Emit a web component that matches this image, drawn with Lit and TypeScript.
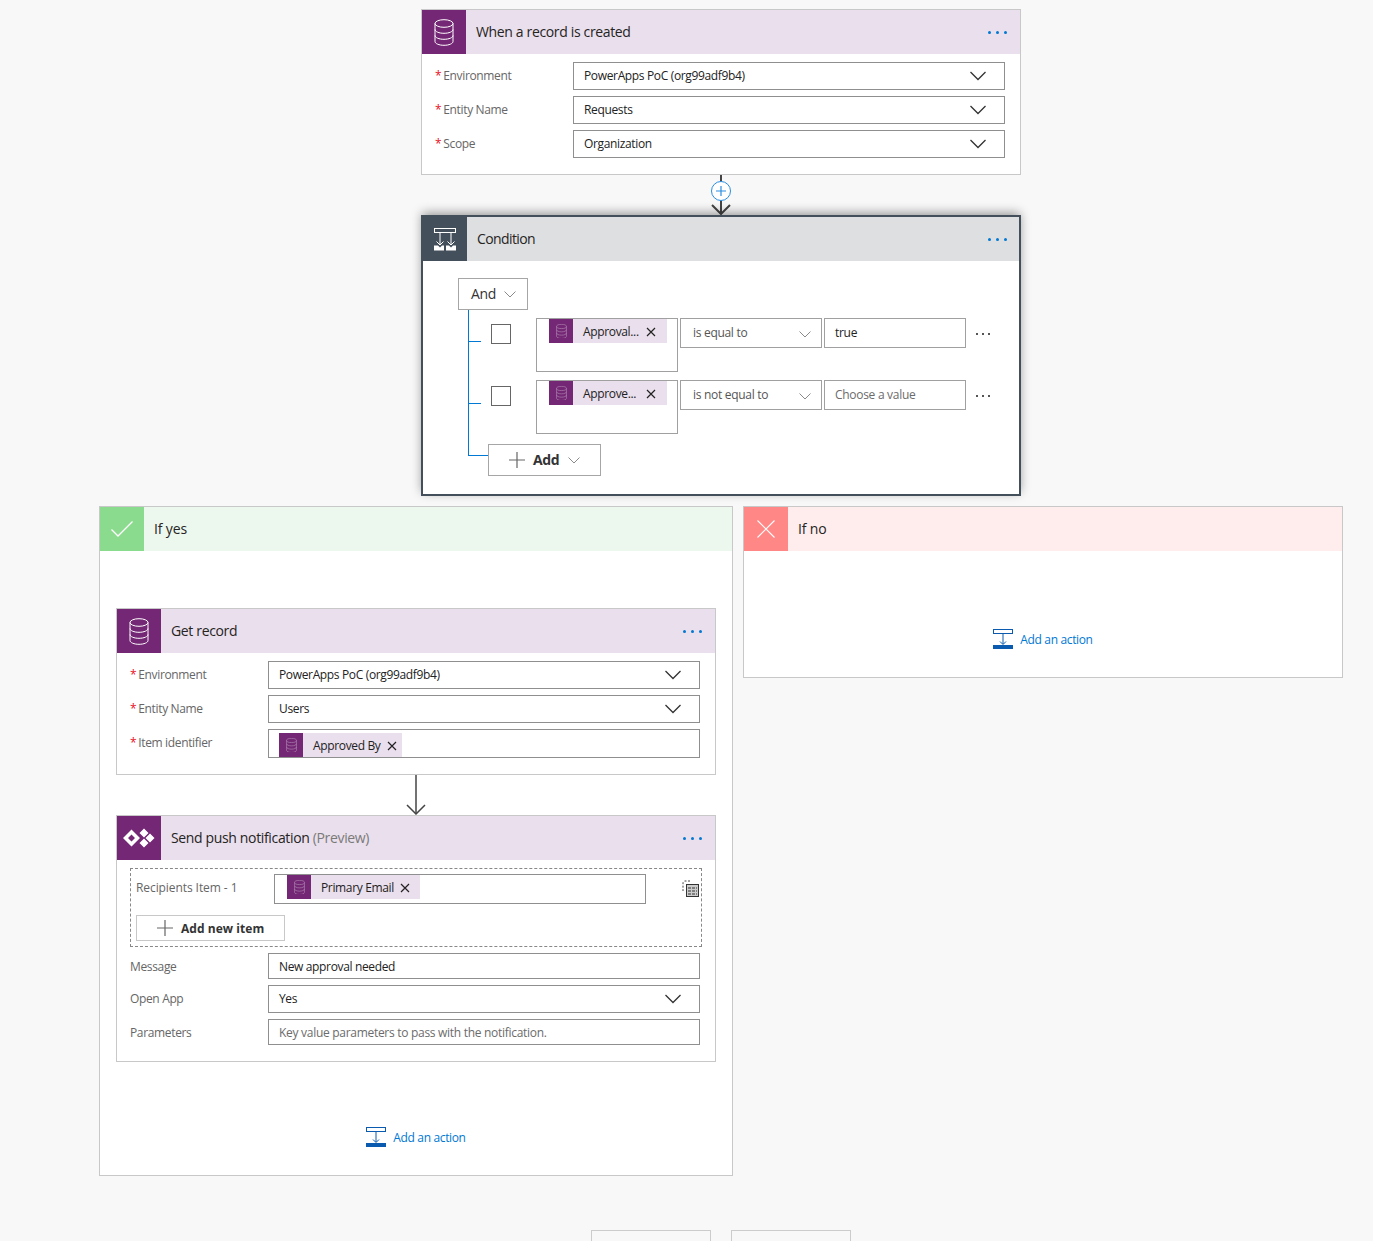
import { LitElement, html, css } from "lit";
import { customElement } from "lit/decorators.js";

const db = (c: string, w = 20, sw = 1) => html`<svg width=${w} height=${w * 1.35} viewBox="0 0 20 27" fill="none" stroke=${c} stroke-width=${sw}><ellipse cx="10" cy="4.500" rx="9" ry="3.800"/><path d="M1 4.500v18c0 2.100 4 3.800 9 3.800s9-1.700 9-3.800v-18M1 10.500c0 2.100 4 3.800 9 3.800s9-1.700 9-3.800M1 16.500c0 2.100 4 3.800 9 3.800s9-1.700 9-3.800"/></svg>`;
const chev = () => html`<svg class="chev" width="16" height="10" viewBox="0 0 16 10" fill="none" stroke="#333" stroke-width="1.3"><path d="M.5 1 8 8.500 15.500 1"/></svg>`;
const lchev = () => html`<svg class="lchev" width="12" height="7" viewBox="0 0 12 7" fill="none" stroke="#8a8a8a" stroke-width="1"><path d="M.5.500 6 6l5.500-5.500"/></svg>`;
const xIcon = () => html`<svg class="x" width="10" height="10" viewBox="0 0 10 10" fill="none" stroke="#222" stroke-width="1.2"><path d="M1 1l8 8M9 1 1 9"/></svg>`;
const plus = (s: number) => html`<svg width=${s} height=${s} viewBox="0 0 16 16" stroke="#666" stroke-width="1.2"><path d="M8 0v16M0 8h16"/></svg>`;
const addIcon = () => html`<svg width="20" height="20" viewBox="0 0 20 20"><rect x=".5" y=".5" width="19" height="4" fill="none" stroke="#0a5bb0"/><path d="M10 5v10M7 12.500l3 3 3-3" fill="none" stroke="#0a5bb0"/><rect y="16" width="20" height="4" fill="#0a5bb0"/></svg>`;
const condIcon = () => html`<svg width="24" height="24" viewBox="0 0 24 24" fill="none" stroke="#fff"><rect x="1.500" y="1.500" width="21" height="4"/><path d="M7 6v12M18 6v12M3.500 14.500 7 18l3.500-3.500M14.500 14.500 18 18l3.500-3.500"/><path d="M1 18.500h4L7 20.500l2-2h2V23.500H1zM13 18.500h3l2 2 2-2h3V23.500H13z" fill="#fff" stroke="none"/></svg>`;
const pushIcon = () => html`<svg width="32" height="20" viewBox="0 0 32 20" fill="#fff"><path fill-rule="evenodd" d="M8.500 1.500 17 10l-8.500 8.500L0 10zM8.500 6.500 5 10l3.500 3.500L12 10z"/><path d="M21 .500 25.500 5 21 9.500 16.500 5zM21 10.500l4.500 4.500-4.500 4.500-4.500-4.500zM27 5.500l4.500 4.500-4.500 4.500L22.500 10z"/></svg>`;
const arrow = (sw: number) => html`<svg class="arrow" width="20" height="40" viewBox="0 0 20 40" fill="none" stroke="#444" stroke-width=${sw}><path d="M10 0v39"/><path d="M1 30l9 9 9-9"/></svg>`;

@customElement("app-root")
export class AppRoot extends LitElement {
  static styles = css`
    :host { display: block; height: 1241px; overflow: hidden; background: #f8f8f8; font-family: "Open Sans", sans-serif; font-size: 12px; color: #252423; letter-spacing: -0.35px; }
    .flow { width: 1244px; margin-left: 99px; padding-top: 9px; display: flex; flex-direction: column; align-items: center; }
    .card { width: 600px; box-sizing: border-box; border: 1px solid #c8c8c8; background: #fff; flex: none; }
    .head { height: 44px; display: flex; align-items: center; background: #eadfec; font-size: 14px; color: #252423; }
    .ico { width: 44px; height: 44px; flex: none; display: flex; align-items: center; justify-content: center; background: #742774; margin-right: 10px; }
    .title { flex: 1; padding-bottom: 2px; }
    .title span { color: #7a7a7a; }
    .dots { display: flex; gap: 5px; margin-right: 13px; }
    .dots i { width: 3px; height: 3px; border-radius: 50%; background: #0078d4; }
    .form { display: grid; grid-template-columns: 138px 1fr; row-gap: 6px; padding: 8px 15px 16px 13px; align-items: center; }
    .label { color: #666; padding-bottom: 2px; }
    .label.flat { padding-bottom: 0; }
    .label b { color: #e81123; font-weight: 400; margin-right: 2px; }
    .input { box-sizing: border-box; height: 28px; border: 1px solid #8f8f8f; display: flex; align-items: center; justify-content: space-between; padding: 0 18px 2px 10px; color: #222; white-space: nowrap; }
    .input .chev { margin-top: 2px; }
    .input.short { height: 26px; padding-bottom: 0; }
    .input.tall { height: 29px; padding-bottom: 0; align-items: flex-end; }
    .ph { color: #6b6b6b; letter-spacing: -0.29px; }
    .tok { display: flex; align-items: center; height: 24px; background: #eadfec; flex: none; color: #222; }
    .tok .ti { width: 24px; height: 24px; background: #742774; display: flex; align-items: center; justify-content: center; margin-right: 10px; }
    .tok .x { margin: 2px 5px 0 6px; }
    .conn { height: 40px; position: relative; display: flex; justify-content: center; flex: none; }
    .arrow { display: block; }
    .circle { position: absolute; left: 0; top: 6px; width: 20px; height: 20px; box-sizing: border-box; border-radius: 50%; background: #fff; border: 1px solid #2a8ee0; display: flex; align-items: center; justify-content: center; }
    .cond { border: 2px solid #444f5c; box-shadow: 0 -3px 10px -1px rgba(0,0,0,.4); position: relative; }
    .cond > .head { background: #dedfe1; }
    .cond > .head .ico { background: #444f5c; }
    .cond > .head .title { letter-spacing: -0.6px; }
    .cond > .head .dots { margin-right: 12px; }
    .cbody { padding: 17px 0 18px 35px; height: 233px; box-sizing: border-box; }
    .and { width: 70px; height: 32px; box-sizing: border-box; border: 1px solid #a6a6a6; display: flex; align-items: center; padding: 0 0 2px 12px; gap: 8px; font-size: 14px; color: #333; }
    .and .lchev { margin-top: 2px; }
    .tree { margin-left: 10px; }
    .branch { display: flex; height: 62px; box-sizing: border-box; padding-top: 8px; border-left: 1px solid #0078d4; }
    .tick { width: 12px; height: 1px; background: #0078d4; margin-top: 23px; flex: none; }
    .chk { width: 20px; height: 20px; box-sizing: border-box; border: 1px solid #666; margin: 6px 25px 0 10px; flex: none; }
    .tbox { width: 142px; height: 54px; box-sizing: border-box; border: 1px solid #a0a0a0; padding-left: 12px; flex: none; margin-right: 2px; }
    .tbox .tok { width: 118px; }
    .tbox .tok .t { flex: 1; }
    .tbox .tok .x { margin-right: 11px; }
    .op, .val { width: 142px; height: 30px; box-sizing: border-box; border: 1px solid #a0a0a0; display: flex; align-items: center; flex: none; padding: 0 10px 0 12px; margin-right: 2px; color: #555; justify-content: space-between; letter-spacing: -0.3px; }
    .op span { padding-bottom: 2px; }
    .op .lchev { margin-top: 2px; }
    .val { padding-left: 10px; padding-bottom: 2px; color: #222; margin-right: 10px; }
    .val.ph { color: #6b6b6b; letter-spacing: -0.29px; padding-bottom: 2px; }
    .more { display: flex; gap: 4px; margin-top: 15px; }
    .more i { width: 2px; height: 2px; background: #555; }
    .addrow { display: flex; }
    .elbow { width: 19px; height: 21px; border-left: 1px solid #0078d4; border-bottom: 1px solid #0078d4; flex: none; }
    .addbtn { margin-top: 10px; width: 113px; height: 32px; box-sizing: border-box; border: 1px solid #a6a6a6; display: flex; align-items: center; padding-left: 20px; font-weight: 700; font-size: 14px; color: #333; }
    .addbtn span { padding-bottom: 2px; }
    .addbtn svg:first-child { margin-right: 8px; }
    .addbtn .lchev { margin-left: 9px; }
    .split { display: flex; gap: 10px; align-items: flex-start; margin-top: 10px; flex: none; }
    .yes { width: 634px; height: 670px; }
    .no { height: 172px; }
    .yes > .head { background: #ecf7ee; }
    .yes > .head .ico { background: #8bdb8f; }
    .no > .head { background: #ffeded; }
    .no > .head .ico { background: #ff8785; }
    .yes > .head .title, .no > .head .title { letter-spacing: -0.15px; }
    .ybody { padding: 57px 16px 0; display: flex; flex-direction: column; align-items: center; }
    .action { display: flex; align-items: center; justify-content: center; gap: 7px; color: #0078d4; }
    .ybody .action { margin-top: 65px; }
    .no .action { margin-top: 78px; }
    .dash { grid-column: 1 / 3; height: 79px; box-sizing: border-box; border: 1px dashed #888; padding: 5px 5px 0 5px; display: grid; grid-template-columns: 138px 372px 1fr; grid-template-rows: 30px auto; align-content: start; align-items: center; margin-right: -2px; }
    .dash .label { letter-spacing: -0.08px; padding-bottom: 4px; }
    .dash .input { height: 30px; padding: 0 0 0 12px; align-items: flex-start; justify-content: flex-start; }
    .dash .tok .x { margin-right: 10px; }
    .tbl { justify-self: end; margin-right: -3px; margin-bottom: 2px; }
    .newitem { grid-column: 1 / 3; margin-top: 11px; width: 149px; height: 26px; box-sizing: border-box; border: 1px solid #c8c8c8; display: flex; align-items: center; padding-left: 20px; font-weight: 700; color: #333; gap: 8px; letter-spacing: 0.05px; }
    .stubs { display: flex; gap: 20px; margin-top: 54px; flex: none; }
    .stubs div { width: 120px; height: 40px; box-sizing: border-box; border: 1px solid #ccc; }
  `;

  private dots() { return html`<div class="dots"><i></i><i></i><i></i></div>`; }
  private tok(t: string) { return html`<div class="tok"><div class="ti">${db("#b896bb", 11)}</div><span class="t">${t}</span>${xIcon()}</div>`; }
  private lab(t: string, req = true, flat = false) { return html`<div class="label ${flat ? "flat" : ""}">${req ? html`<b>*</b>` : ""}${t}</div>`; }
  private sel(t: string) { return html`<div class="input"><span>${t}</span>${chev()}</div>`; }
  private branch(t: string, op: string, v: string, ph: boolean) {
    return html`<div class="branch"><div class="tick"></div><div class="chk"></div>
      <div class="tbox">${this.tok(t)}</div>
      <div class="op"><span>${op}</span>${lchev()}</div>
      <div class="val ${ph ? "ph" : ""}">${v}</div>
      <div class="more"><i></i><i></i><i></i></div></div>`;
  }
  private action() { return html`<div class="action">${addIcon()}<span>Add an action</span></div>`; }

  render() {
    return html`<div class="flow">
      <div class="card">
        <div class="head"><div class="ico">${db("#fff")}</div><div class="title">When a record is created</div>${this.dots()}</div>
        <div class="form">
          ${this.lab("Environment")}${this.sel("PowerApps PoC (org99adf9b4)")}
          ${this.lab("Entity Name")}${this.sel("Requests")}
          ${this.lab("Scope")}${this.sel("Organization")}
        </div>
      </div>
      <div class="conn">${arrow(2)}<div class="circle"><svg width="10" height="10" viewBox="0 0 10 10" stroke="#2a8ee0" stroke-width="1.2"><path d="M5 0v10M0 5h10"/></svg></div></div>
      <div class="card cond">
        <div class="head"><div class="ico">${condIcon()}</div><div class="title">Condition</div>${this.dots()}</div>
        <div class="cbody">
          <div class="and"><span>And</span>${lchev()}</div>
          <div class="tree">
            ${this.branch("Approval...", "is equal to", "true", false)}
            ${this.branch("Approve...", "is not equal to", "Choose a value", true)}
            <div class="addrow"><div class="elbow"></div><div class="addbtn">${plus(16)}<span>Add</span>${lchev()}</div></div>
          </div>
        </div>
      </div>
      <div class="split">
        <div class="card yes">
          <div class="head"><div class="ico"><svg width="22" height="16" viewBox="0 0 22 16" fill="none" stroke="#fff" stroke-width="1.3"><path d="M.5 8.500 7 15 21.500.500"/></svg></div><div class="title">If yes</div></div>
          <div class="ybody">
            <div class="card">
              <div class="head"><div class="ico">${db("#fff")}</div><div class="title">Get record</div>${this.dots()}</div>
              <div class="form">
                ${this.lab("Environment")}${this.sel("PowerApps PoC (org99adf9b4)")}
                ${this.lab("Entity Name")}${this.sel("Users")}
                ${this.lab("Item identifier")}<div class="input tall">${this.tok("Approved By")}</div>
              </div>
            </div>
            <div class="conn">${arrow(1.5)}</div>
            <div class="card push">
              <div class="head"><div class="ico">${pushIcon()}</div><div class="title">Send push notification <span>(Preview)</span></div>${this.dots()}</div>
              <div class="form">
                <div class="dash">
                  <div class="label">Recipients Item - 1</div>
                  <div class="input">${this.tok("Primary Email")}</div>
                  <svg class="tbl" width="17" height="17" viewBox="0 0 17 17" fill="none"><path d="M8 1H3a2 2 0 0 0-2 2v8" stroke="#444" stroke-dasharray="2 1.500"/><rect x="4.500" y="4.500" width="12" height="12" fill="#ccc" stroke="#333"/><path d="M6 8h9M6 11h9M6 14h9" stroke="#333" stroke-dasharray="3 1"/></svg>
                  <div class="newitem">${plus(16)}Add new item</div>
                </div>
                ${this.lab("Message", false, true)}<div class="input short">New approval needed</div>
                ${this.lab("Open App", false)}${this.sel("Yes")}
                ${this.lab("Parameters", false, true)}<div class="input short ph">Key value parameters to pass with the notification.</div>
              </div>
            </div>
            ${this.action()}
          </div>
        </div>
        <div class="card no">
          <div class="head"><div class="ico"><svg width="18" height="18" viewBox="0 0 18 18" fill="none" stroke="#fff" stroke-width="1.1"><path d="M.5.500l17 17M17.500.500l-17 17"/></svg></div><div class="title">If no</div></div>
          ${this.action()}
        </div>
      </div>
      <div class="stubs"><div></div><div></div></div>
    </div>`;
  }
}
